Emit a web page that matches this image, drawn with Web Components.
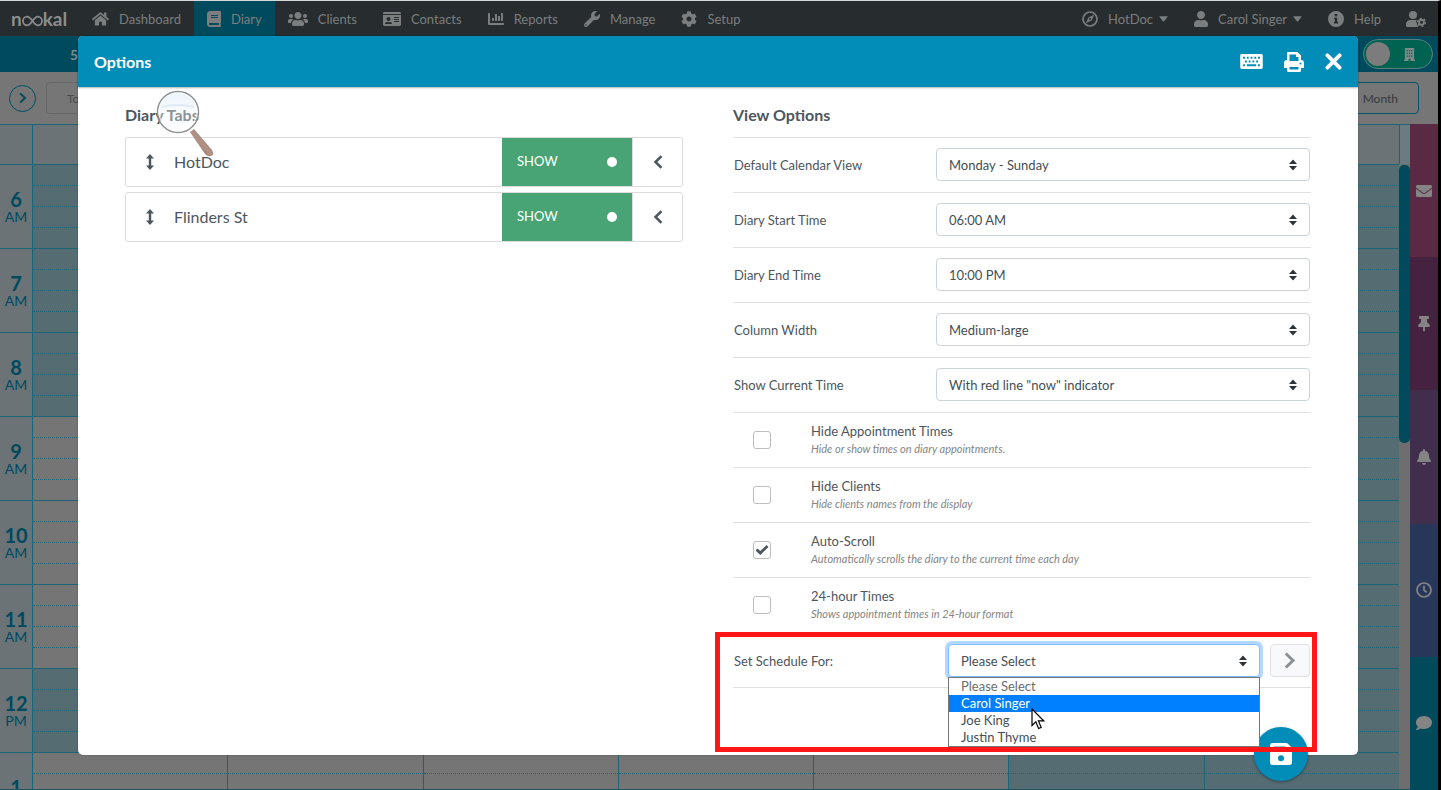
<!DOCTYPE html>
<html lang="en">
<head>
<meta charset="utf-8">
<meta name="viewport" content="width=device-width, initial-scale=1">
<title>Diary - Options</title>
<style>
    body{
        margin: 0;
        font-family: Lato, "Open Sans", sans-serif;
        font-size: 13px;
        color: #4d565c;
    }
</style>
</head>
<body>
<diary-app></diary-app>

<script>
//Icon shapes: [viewBox, markup]
const icons = {
    home: ['0 0 576 512', '<path d="M280.37 148.26L96 300.11V464a16 16 0 0 0 16 16l112.06-.29a16 16 0 0 0 15.92-16V368a16 16 0 0 1 16-16h64a16 16 0 0 1 16 16v95.64a16 16 0 0 0 16 16.05L464 480a16 16 0 0 0 16-16V300L295.67 148.26a12.19 12.19 0 0 0-15.3 0zM571.6 251.47L488 182.56V44.05a12 12 0 0 0-12-12h-56a12 12 0 0 0-12 12v72.61L318.47 43a48 48 0 0 0-61 0L4.34 251.47a12 12 0 0 0-1.6 16.9l25.5 31A12 12 0 0 0 45.15 301l235.22-193.74a12.19 12.19 0 0 1 15.3 0L530.9 301a12 12 0 0 0 16.9-1.6l25.5-31a12 12 0 0 0-1.7-16.93z"/>'],
    book: ['0 0 448 512', '<path d="M448 360V24c0-13.3-10.7-24-24-24H96C43 0 0 43 0 96v320c0 53 43 96 96 96h328c13.3 0 24-10.7 24-24v-16c0-7.5-3.5-14.3-8.9-18.7-4.2-15.4-4.2-59.3 0-74.7 5.4-4.3 8.9-11.1 8.9-18.6zM128 134c0-3.3 2.7-6 6-6h212c3.3 0 6 2.7 6 6v20c0 3.3-2.7 6-6 6H134c-3.3 0-6-2.7-6-6v-20zm0 64c0-3.3 2.7-6 6-6h212c3.3 0 6 2.7 6 6v20c0 3.3-2.7 6-6 6H134c-3.3 0-6-2.7-6-6v-20zm253.4 250H96c-17.7 0-32-14.3-32-32 0-17.6 14.4-32 32-32h285.4c-1.9 17.1-1.9 46.9 0 64z"/>'],
    users: ['0 0 640 512', '<path d="M96 224c35.3 0 64-28.7 64-64s-28.7-64-64-64-64 28.7-64 64 28.7 64 64 64zm448 0c35.3 0 64-28.7 64-64s-28.7-64-64-64-64 28.7-64 64 28.7 64 64 64zm32 32h-64c-17.6 0-33.5 7.1-45.1 18.6 40.3 22.1 68.9 62 75.1 109.4h66c17.7 0 32-14.3 32-32v-32c0-35.3-28.7-64-64-64zm-256 0c61.9 0 112-50.1 112-112S381.9 32 320 32 208 82.1 208 144s50.1 112 112 112zm76.8 32h-8.3c-20.8 10-43.9 16-68.5 16s-47.6-6-68.5-16h-8.3C179.6 288 128 339.6 128 403.2V432c0 26.5 21.5 48 48 48h288c26.5 0 48-21.5 48-48v-28.8c0-63.6-51.6-115.2-115.2-115.2zm-223.7-13.4C161.5 263.1 145.6 256 128 256H64c-35.3 0-64 28.7-64 64v32c0 17.7 14.3 32 32 32h65.9c6.3-47.4 34.9-87.3 75.2-109.4z"/>'],
    card: ['0 0 576 512', '<path d="M528 32H48C21.5 32 0 53.5 0 80v16h576V80c0-26.5-21.5-48-48-48zM0 432c0 26.5 21.5 48 48 48h480c26.5 0 48-21.5 48-48V128H0v304zm352-232c0-4.4 3.6-8 8-8h144c4.4 0 8 3.6 8 8v16c0 4.4-3.6 8-8 8H360c-4.4 0-8-3.6-8-8v-16zm0 64c0-4.4 3.6-8 8-8h144c4.4 0 8 3.6 8 8v16c0 4.4-3.6 8-8 8H360c-4.4 0-8-3.6-8-8v-16zm0 64c0-4.4 3.6-8 8-8h144c4.4 0 8 3.6 8 8v16c0 4.4-3.6 8-8 8H360c-4.4 0-8-3.6-8-8v-16zM176 192c35.3 0 64 28.7 64 64s-28.7 64-64 64-64-28.7-64-64 28.7-64 64-64zM67.1 396.2C75.5 370.5 99.6 352 128 352h8.2c12.3 5.1 25.7 8 39.8 8s27.6-2.9 39.8-8h8.2c28.4 0 52.5 18.5 60.9 44.2 3.2 9.9-5.2 19.8-15.6 19.8H82.7c-10.4 0-18.8-10-15.6-19.8z"/>'],
    chart: ['0 0 512 512', '<path d="M332.8 320h38.4c6.4 0 12.8-6.4 12.8-12.8V172.8c0-6.4-6.4-12.8-12.8-12.8h-38.4c-6.4 0-12.8 6.4-12.8 12.8v134.4c0 6.4 6.4 12.8 12.8 12.8zm96 0h38.4c6.4 0 12.8-6.4 12.8-12.8V76.8c0-6.4-6.4-12.8-12.8-12.8h-38.4c-6.4 0-12.8 6.4-12.8 12.8v230.4c0 6.4 6.4 12.8 12.8 12.8zm-288 0h38.4c6.4 0 12.8-6.4 12.8-12.8v-70.4c0-6.4-6.4-12.8-12.8-12.8h-38.4c-6.4 0-12.8 6.4-12.8 12.8v70.4c0 6.4 6.4 12.8 12.8 12.8zm96 0h38.4c6.4 0 12.8-6.4 12.8-12.8V108.8c0-6.4-6.4-12.8-12.8-12.8h-38.4c-6.4 0-12.8 6.4-12.8 12.8v198.4c0 6.4 6.4 12.8 12.8 12.8zM496 384H64V80c0-8.84-7.16-16-16-16H16C7.16 64 0 71.16 0 80v336c0 17.67 14.33 32 32 32h464c8.84 0 16-7.16 16-16v-32c0-8.84-7.16-16-16-16z"/>'],
    wrench: ['0 0 512 512', '<path d="M507.73 109.1c-2.24-9.03-13.54-12.09-20.12-5.51l-74.36 74.36-67.88-11.31-11.31-67.88 74.36-74.36c6.62-6.62 3.43-17.9-5.66-20.16-47.38-11.74-99.55.91-136.58 37.93-39.64 39.64-50.55 97.1-34.05 147.2L18.74 402.76c-24.99 24.99-24.99 65.51 0 90.5 24.99 24.99 65.51 24.99 90.5 0l213.21-213.21c50.12 16.71 107.47 5.68 147.37-34.22 37.07-37.07 49.7-89.32 37.91-136.73zM64 472c-13.25 0-24-10.75-24-24 0-13.26 10.75-24 24-24s24 10.74 24 24c0 13.25-10.75 24-24 24z"/>'],
    cog: ['0 0 512 512', '<path d="M487.4 315.7l-42.6-24.6c4.3-23.2 4.3-47 0-70.2l42.6-24.6c4.9-2.8 7.1-8.6 5.5-14-11.1-35.6-30-67.8-54.7-94.6-3.8-4.1-10-5.1-14.8-2.3L380.8 110c-17.9-15.4-38.5-27.3-60.8-35.1V25.8c0-5.6-3.9-10.5-9.4-11.7-36.7-8.2-74.3-7.8-109.2 0-5.5 1.2-9.4 6.1-9.4 11.7V75c-22.2 7.9-42.8 19.8-60.8 35.1L88.7 85.5c-4.9-2.8-11-1.9-14.8 2.3-24.7 26.7-43.6 58.9-54.7 94.6-1.7 5.4.6 11.2 5.5 14L67.3 221c-4.3 23.2-4.3 47 0 70.2l-42.6 24.6c-4.9 2.8-7.1 8.6-5.5 14 11.1 35.6 30 67.8 54.7 94.6 3.8 4.1 10 5.1 14.8 2.3l42.6-24.6c17.9 15.4 38.5 27.3 60.8 35.1v49.2c0 5.6 3.9 10.5 9.4 11.7 36.7 8.2 74.3 7.8 109.2 0 5.5-1.2 9.4-6.1 9.4-11.7v-49.2c22.2-7.9 42.8-19.8 60.8-35.1l42.6 24.6c4.9 2.8 11 1.9 14.8-2.3 24.7-26.7 43.6-58.9 54.7-94.6 1.5-5.5-.7-11.3-5.6-14.1zM256 336c-44.1 0-80-35.9-80-80s35.9-80 80-80 80 35.9 80 80-35.9 80-80 80z"/>'],
    compass: ['0 0 16 16', '<circle cx="8" cy="8" r="7" fill="none" stroke="currentColor" stroke-width="1.7"/><path fill-rule="evenodd" d="M12.2 3.8L9.6 9.6 3.8 12.2 6.4 6.4zM8 7a1 1 0 1 0 0 2 1 1 0 0 0 0-2z"/>'],
    user: ['0 0 448 512', '<path d="M224 256c70.7 0 128-57.3 128-128S294.7 0 224 0 96 57.3 96 128s57.3 128 128 128zm89.6 32h-16.7c-22.2 10.2-46.9 16-72.9 16s-50.6-5.8-72.9-16h-16.7C60.2 288 0 348.2 0 422.4V464c0 26.5 21.5 48 48 48h352c26.5 0 48-21.5 48-48v-41.6c0-74.2-60.2-134.4-134.4-134.4z"/>'],
    info: ['0 0 16 16', '<path fill-rule="evenodd" d="M8 0a8 8 0 1 0 0 16A8 8 0 0 0 8 0zM6.6 4.2a1.4 1.4 0 1 0 2.8 0 1.4 1.4 0 0 0-2.8 0zM6 6.7h3.2v4.1h.9v1.6H6v-1.6h.9V8.3H6z"/>'],
    usercog: ['0 0 20 16', '<circle cx="7" cy="4" r="4"/><path d="M4.2 9h5.6l1 .3-.9 1.8 1.3 1-.3 1.4 1.3 2.5H1.5A1.5 1.5 0 0 1 0 14.5v-1.3A4.2 4.2 0 0 1 4.2 9z"/><g fill="none" stroke="currentColor"><circle cx="15.5" cy="11.3" r="2.5" stroke-width="1.9"/><circle cx="15.5" cy="11.3" r="4" stroke-width="1.3" stroke-dasharray="2 2.18"/></g>'],
    building: ['0 0 12 14', '<path fill-rule="evenodd" d="M1 0h10v12.5h1V14H7v-2.500H5V14H0v-1.500h1zM2.800 2v1.400h1.400V2zM5.300 2v1.400h1.400V2zM7.800 2v1.400h1.400V2zM2.800 5v1.400h1.400V5zM5.300 5v1.400h1.400V5zM7.800 5v1.400h1.400V5zM2.800 8v1.400h1.400V8zM5.300 8v1.400h1.400V8zM7.800 8v1.400h1.400V8z"/>'],
    envelope: ['0 0 512 512', '<path d="M502.3 190.8c3.9-3.1 9.7-.2 9.7 4.7V400c0 26.5-21.5 48-48 48H48c-26.5 0-48-21.5-48-48V195.6c0-5 5.7-7.8 9.7-4.7 22.4 17.4 52.1 39.5 154.1 113.6 21.1 15.4 56.7 47.8 92.2 47.6 35.7.3 72-32.8 92.3-47.6 102-74.1 131.6-96.3 154-113.7zM256 320c23.2.4 56.6-29.2 73.4-41.4 132.7-96.3 142.8-104.7 173.4-128.7 5.8-4.5 9.2-11.5 9.2-18.9v-19c0-26.5-21.5-48-48-48H48c-26.5 0-48 21.5-48 48v19c0 7.4 3.4 14.3 9.2 18.9 30.6 23.9 40.7 32.4 173.4 128.7 16.8 12.2 50.2 41.8 73.4 41.4z"/>'],
    pin: ['0 0 384 512', '<path d="M298.028 214.267L285.793 96H328c13.255 0 24-10.745 24-24V24c0-13.255-10.745-24-24-24H56C42.745 0 32 10.745 32 24v48c0 13.255 10.745 24 24 24h42.207L85.972 214.267C37.465 236.82 0 277.261 0 328c0 13.255 10.745 24 24 24h136v104.007c0 1.242.289 2.467.845 3.578l24 48c2.941 5.882 11.364 5.893 14.311 0l24-48a8.008 8.008 0 0 0 .845-3.578V352h136c13.255 0 24-10.745 24-24-.001-51.183-37.983-91.42-85.973-113.733z"/>'],
    bell: ['0 0 448 512', '<path d="M224 512c35.32 0 63.97-28.65 63.97-64H160.03c0 35.35 28.65 64 63.97 64zm215.39-149.71c-19.32-20.76-55.47-51.99-55.47-154.29 0-77.7-54.48-139.9-127.94-155.16V32c0-17.67-14.32-32-31.98-32s-31.98 14.33-31.98 32v20.84C118.56 68.1 64.08 130.3 64.08 208c0 102.3-36.15 133.53-55.47 154.29-6 6.45-8.66 14.16-8.61 21.71.11 16.4 12.98 32 32.1 32h383.8c19.12 0 32-15.6 32.1-32 .05-7.55-2.61-15.27-8.61-21.71z"/>'],
    clock: ['0 0 16 16', '<g fill="none" stroke="currentColor" stroke-width="1.7"><circle cx="8" cy="8" r="7"/><path d="M8 3.5v4.7l2.7 2.2"/></g>'],
    comment: ['0 0 512 512', '<path d="M256 32C114.6 32 0 125.1 0 240c0 49.6 21.4 95 57 130.7C44.5 421.1 2.7 466 2.2 466.5c-2.2 2.3-2.8 5.7-1.5 8.7S4.8 480 8 480c66.3 0 116-31.8 140.6-51.4 32.7 12.3 69 19.4 107.4 19.4 141.4 0 256-93.1 256-208S397.4 32 256 32z"/>'],
    caret: ['0 0 10 6', '<path d="M1 0h8q1 0 .4.9L5.6 5.5q-.6.6-1.2 0L.6.9Q0 0 1 0z"/>'],
    sort: ['0 0 8 12', '<path d="M4 .5l4 4.4H0zM4 11.500L0 7.100h8z"/>'],
    left: ['0 0 10 14', '<path d="M8.5 1.2L2.5 7l6 5.8" fill="none" stroke="currentColor" stroke-width="2.5"/>'],
    right: ['0 0 10 14', '<path d="M1.5 1.2l6 5.8-6 5.8" fill="none" stroke="currentColor" stroke-width="2.5"/>'],
    updown: ['0 0 8 16', '<path d="M4 0l4 4.5H5.2v7H8L4 16 0 11.5h2.8v-7H0z"/>'],
    close: ['0 0 14 14', '<path d="M2 2l10 10M12 2L2 12" fill="none" stroke="currentColor" stroke-width="3.2" stroke-linecap="round"/>'],
    keyboard: ['0 0 24 16', '<path fill-rule="evenodd" d="M1.5 0h21Q24 0 24 1.5v13q0 1.5-1.5 1.5h-21Q0 16 0 14.5v-13Q0 0 1.5 0zM3 3v2h2V3zm4 0v2h2V3zm4 0v2h2V3zm4 0v2h2V3zm4 0v2h2V3zM5 7v2h2V7zm4 0v2h2V7zm4 0v2h2V7zm4 0v2h2V7zM3 11v2h2v-2zm4 0v2h10v-2zm12 0v2h2v-2z"/>'],
    print: ['0 0 20 20', '<path fill-rule="evenodd" d="M4 0h9.5L17 3.5V8q3 0 3 3v5h-3v2.5Q17 20 15.5 20h-11Q3 20 3 18.500V16H0v-5q0-3 3-3V1q0-1 1-1zm1.500 2.500V9h9V5H12V2.500zm0 12.500v2.500h9V15zM16.500 10.500a1 1 0 1 0 0 2 1 1 0 0 0 0-2z"/>'],
    save: ['0 0 22 22', '<path fill-rule="evenodd" d="M2.5 0h13.6q1 0 1.8.8l3.3 3.3q.8.8.8 1.8v13.6q0 2.5-2.5 2.5h-17Q0 22 0 19.500v-17Q0 0 2.500 0zM3.500 3.500v5h12v-5zM11 12.200a3 3 0 1 0 0 6 3 3 0 0 0 0-6z"/>'],
    infinity: ['0 0 22 12', '<path d="M11 6C9 3.3 7.6 1.5 5.5 1.5a4.5 4.5 0 0 0 0 9C7.6 10.5 9 8.7 11 6s3.4-4.5 5.5-4.5a4.5 4.5 0 0 1 0 9C14.4 10.5 13 8.7 11 6z" fill="none" stroke="currentColor" stroke-width="1.8"/>']
};

const hours = [['6', 'AM', 1], ['7', 'AM', 1], ['8', 'AM', 1], ['9', 'AM', 0], ['10', 'AM', 0], ['11', 'AM', 0], ['12', 'PM', 1], ['1', 'PM', 0]];

//Base class, every element only gives its template
class baseElement extends HTMLElement{
    constructor(){
        super();
        this.attachShadow({mode: "open"});
    }

    render(){
        const template = document.createElement('template');
        template.innerHTML = this.getTemplate();
        this.shadowRoot.replaceChildren(template.content.cloneNode(true));
    }

    connectedCallback(){
        this.render();
    }
}

class uiIcon extends baseElement{
    getTemplate(){
        const [box, shape] = icons[this.getAttribute('name')];
        const w = this.getAttribute('w');
        const h = this.getAttribute('h') || w;
        return `
            <style>
                :host{ display: inline-flex; flex: none; }
                svg{ display: block; fill: currentColor; }
            </style>
            <svg width="${w}" height="${h}" viewBox="${box}" aria-hidden="true">${shape}</svg>
        `;
    }
}

class navItem extends baseElement{
    getTemplate(){
        const caret = this.hasAttribute('menu') ? '<ui-icon name="caret" w="9" h="6"></ui-icon>' : '';
        return `
            <style>
                :host{ display: block; }
                a{
                    display: flex;
                    align-items: center;
                    height: 100%;
                    padding: 0 13px;
                    gap: 10px;
                    box-sizing: border-box;
                    color: inherit;
                    text-decoration: none;
                }
                .label{ display: flex; align-items: center; gap: 6px; white-space: nowrap; }
                :host([active]) a{ background: #004a5e; }
            </style>
            <a href="#">
                <ui-icon name="${this.getAttribute('icon')}" w="${this.getAttribute('w')}" h="16"></ui-icon>
                <span class="label"><slot></slot>${caret}</span>
            </a>
        `;
    }
}

class navBar extends baseElement{
    getTemplate(){
        return `
            <style>
                :host{ display: block; background: #272c2e; color: #7b7e7f; }
                nav{ display: flex; height: 35px; }
                .logo{
                    display: flex;
                    align-items: center;
                    width: 68px;
                    padding-left: 11px;
                    font-size: 19px;
                    font-weight: 700;
                    color: #8b8e8f;
                    text-decoration: none;
                }
                .logo ui-icon{ padding-top: 4px; }
                .space{ flex: 1; }
                .last{ display: flex; align-items: center; padding: 0 12px; color: inherit; }
            </style>
            <nav>
                <a class="logo" href="#" aria-label="nookal">n<ui-icon name="infinity" w="21" h="12"></ui-icon>kal</a>
                <nav-item icon="home" w="17">Dashboard</nav-item>
                <nav-item icon="book" w="14" active>Diary</nav-item>
                <nav-item icon="users" w="20">Clients</nav-item>
                <nav-item icon="card" w="18">Contacts</nav-item>
                <nav-item icon="chart" w="16">Reports</nav-item>
                <nav-item icon="wrench" w="16">Manage</nav-item>
                <nav-item icon="cog" w="16">Setup</nav-item>
                <div class="space"></div>
                <nav-item icon="compass" w="16" menu>HotDoc</nav-item>
                <nav-item icon="user" w="14" menu>Carol Singer</nav-item>
                <nav-item icon="info" w="16">Help</nav-item>
                <a class="last" href="#" aria-label="Account"><ui-icon name="usercog" w="20" h="16"></ui-icon></a>
            </nav>
        `;
    }
}

class diaryToolbar extends baseElement{
    getTemplate(){
        return `
            <style>
                :host{ display: block; }
                button{ font: inherit; cursor: pointer; }
                .date{
                    display: flex;
                    align-items: center;
                    justify-content: space-between;
                    height: 36px;
                    padding: 0 5px 0 70px;
                    background: #004a5e;
                    color: #7b8b90;
                    font-size: 14px;
                    font-weight: 700;
                }
                .switch{
                    display: flex;
                    align-items: center;
                    gap: 14px;
                    width: 70px;
                    height: 30px;
                    padding: 0 2px;
                    border: 1px solid #57807f;
                    border-radius: 15px;
                    background: #006351;
                    color: #7d8b88;
                }
                .knob{ width: 24px; height: 24px; border-radius: 50%; background: #7c7c7c; }
                .tools{
                    display: flex;
                    align-items: center;
                    height: 52px;
                    padding: 0 19px 0 9px;
                    gap: 10px;
                    background: #767676;
                }
                .next{
                    display: flex;
                    align-items: center;
                    justify-content: center;
                    width: 27px;
                    height: 27px;
                    padding: 0;
                    border: 1px solid #004f63;
                    border-radius: 50%;
                    background: none;
                    color: #004a5e;
                }
                .box{
                    height: 32px;
                    padding: 0 20px;
                    border: 1px solid #666;
                    border-radius: 4px;
                    background: none;
                    color: #4b4b4b;
                    font-size: 12px;
                }
                .month{ margin-left: auto; border-color: #00566b; color: #34393b; }
            </style>
            <div class="date">
                <span>5</span>
                <button class="switch" role="switch" aria-checked="false" aria-label="Location view">
                    <span class="knob"></span>
                    <ui-icon name="building" w="11" h="13"></ui-icon>
                </button>
            </div>
            <div class="tools">
                <button class="next" aria-label="Next"><ui-icon name="right" w="8" h="12"></ui-icon></button>
                <button class="box">Today</button>
                <button class="box month">Month</button>
            </div>
        `;
    }
}

class diaryGrid extends baseElement{
    getCells(open){
        //Saturday and Sunday are always closed
        return Array.from({length: 7}, (_, i) => `
            <div class="day ${open && i < 5 ? '' : 'closed'}"><i></i><i></i><i></i><i></i></div>
        `).join('');
    }

    getTemplate(){
        const rows = hours.map(([n, m, closed]) => `
            <div class="hour">
                <div class="time"><b>${n}</b><span>${m}</span></div>
                ${this.getCells(!closed)}
            </div>
        `).join('');
        return `
            <style>
                :host{ display: flex; flex-direction: column; min-height: 0; overflow: hidden; background: #6b7377; --line: #1a6678; }
                .head, .hour{ display: flex; flex: none; border-top: 1px solid var(--line); box-sizing: border-box; }
                .head{ height: 40px; }
                .head div, .day{ flex: 1; border-left: 1px solid var(--line); }
                .head .corner{ flex: 0 0 32px; border: 0; }
                .head .end{ flex: 0 0 10px; background: #6b7b81; }
                .body{ display: flex; flex: 1; min-height: 0; overflow: hidden; border-bottom: 1px solid #1d5563; }
                .rows{ flex: 1; }
                .hour{ height: 84px; }
                .time{
                    display: flex;
                    flex-direction: column;
                    align-items: center;
                    justify-content: center;
                    flex: 0 0 32px;
                    padding-top: 2px;
                    box-sizing: border-box;
                    font-size: 14px;
                    line-height: 17px;
                    color: #004a5e;
                }
                .time b{ font-size: 20px; }
                .day{ display: flex; flex-direction: column; background: #757575; }
                .closed{ background: #566c73; }
                .day i{ height: 20px; border-top: 1px dotted var(--line); }
                .day i:first-child{ border-color: transparent; height: 19px; }
                .track{ width: 11px; background: #6e6e6e; }
                .thumb{ height: 278px; border-radius: 5px; background: #004a5c; margin-top: 1px; }
            </style>
            <div class="head">
                <div class="corner"></div>
                <div></div><div></div><div></div><div></div><div></div><div></div><div></div>
                <div class="end"></div>
            </div>
            <div class="body">
                <div class="rows">${rows}</div>
                <div class="track"><div class="thumb"></div></div>
            </div>
        `;
    }
}

class sideRail extends baseElement{
    getTemplate(){
        return `
            <style>
                :host{ display: flex; flex-direction: column; width: 28px; flex: none; }
                button{
                    display: flex;
                    align-items: center;
                    justify-content: center;
                    flex: 1;
                    padding: 0;
                    border: 0;
                    color: #848484;
                }
                .mail{ background: #5a2943; }
                .pin{ background: #45223f; }
                .bell{ background: #402e4c; }
                .clock{ background: #27375a; }
                .chat{ background: #004a5c; }
            </style>
            <button class="mail" aria-label="Messages"><ui-icon name="envelope" w="16"></ui-icon></button>
            <button class="pin" aria-label="Notes"><ui-icon name="pin" w="12" h="16"></ui-icon></button>
            <button class="bell" aria-label="Alerts"><ui-icon name="bell" w="14" h="16"></ui-icon></button>
            <button class="clock" aria-label="Wait list"><ui-icon name="clock" w="16"></ui-icon></button>
            <button class="chat" aria-label="Chat"><ui-icon name="comment" w="16"></ui-icon></button>
        `;
    }
}

class tabRow extends baseElement{
    getTemplate(){
        return `
            <style>
                :host{
                    display: flex;
                    height: 50px;
                    box-sizing: border-box;
                    border: 1px solid #dcdcdc;
                    border-radius: 3px;
                }
                button{ font: inherit; border: 0; padding: 0; background: none; color: inherit; cursor: pointer; }
                .drag{ width: 48px; display: flex; align-items: center; justify-content: center; }
                .name{ flex: 1; align-self: center; padding-bottom: 2px; font-size: 16px; }
                .show{
                    display: flex;
                    align-items: center;
                    justify-content: space-between;
                    width: 130px;
                    padding: 0 15px;
                    background: #48a474;
                    color: #fff;
                }
                .text{ padding-bottom: 2px; }
                .dot{ width: 10px; height: 10px; border-radius: 50%; background: #fff; }
                .open{ width: 50px; display: flex; align-items: center; justify-content: center; border-left: 1px solid #dcdcdc; }
            </style>
            <button class="drag" aria-label="Move"><ui-icon name="updown" w="8" h="16"></ui-icon></button>
            <span class="name"><slot></slot></span>
            <button class="show"><span class="text">SHOW</span><span class="dot"></span></button>
            <button class="open" aria-label="Open"><ui-icon name="left" w="10" h="14"></ui-icon></button>
        `;
    }
}

class optionSelect extends baseElement{
    getTemplate(){
        return `
            <style>
                :host{
                    display: flex;
                    align-items: center;
                    height: 55px;
                    padding-bottom: 1px;
                    box-sizing: border-box;
                    border-top: 1px solid #e0e0e0;
                }
                label{ flex: 0 0 203px; padding-left: 1px; box-sizing: border-box; }
                .field{ display: grid; flex: 1; align-items: center; margin-right: 1px; }
                .field > *{ grid-area: 1 / 1; }
                select{
                    appearance: none;
                    width: 100%;
                    height: 33px;
                    padding: 0 12px;
                    border: 1px solid #ccd3da;
                    border-radius: 4px;
                    background: #fff;
                    color: #454e54;
                    font: inherit;
                }
                ui-icon{ justify-self: end; margin-right: 13px; color: #2d353a; pointer-events: none; }
            </style>
            <label for="field">${this.getAttribute('label')}</label>
            <div class="field">
                <select id="field"><option>${this.getAttribute('value')}</option></select>
                <ui-icon name="sort" w="8" h="12"></ui-icon>
            </div>
        `;
    }
}

class optionCheck extends baseElement{
    getTemplate(){
        return `
            <style>
                :host{ display: flex; align-items: center; height: 55px; box-sizing: border-box; border-top: 1px solid #e0e0e0; }
                input{
                    appearance: none;
                    display: grid;
                    place-items: center;
                    flex: none;
                    width: 18px;
                    height: 18px;
                    margin: 0 40px 0 20px;
                    border: 1px solid #bdbdbd;
                    border-radius: 3px;
                    background: #fff;
                }
                input:checked::before{
                    content: "";
                    width: 13px;
                    height: 12px;
                    background: #4d565c;
                    clip-path: polygon(0 54%, 15% 38%, 37% 59%, 85% 8%, 100% 24%, 37% 92%);
                }
                label{ display: block; line-height: 18px; }
                small{ display: block; font-size: 11px; font-style: italic; color: #858585; }
            </style>
            <input type="checkbox" id="box" ${this.hasAttribute('checked') ? 'checked' : ''}>
            <label for="box"><slot></slot><small>${this.getAttribute('hint')}</small></label>
        `;
    }
}

class scheduleRow extends baseElement{
    getTemplate(){
        return `
            <style>
                :host{
                    display: flex;
                    align-items: center;
                    position: relative;
                    height: 56px;
                    padding-top: 1px;
                    box-sizing: border-box;
                    border-top: 1px solid #e0e0e0;
                    border-bottom: 1px solid #e0e0e0;
                }
                label{ flex: 0 0 215px; padding-left: 1px; box-sizing: border-box; }
                .field{ display: grid; flex: 1; align-items: center; position: relative; }
                .field > *{ grid-area: 1 / 1; }
                select{
                    appearance: none;
                    width: 100%;
                    height: 33px;
                    padding: 0 12px;
                    border: 1px solid #80bdff;
                    border-radius: 4px;
                    box-shadow: 0 0 0 3px #b3d8ff;
                    background: #fff;
                    color: #454e54;
                    font: inherit;
                }
                ui-icon.sort{ justify-self: end; margin-right: 13px; color: #2d353a; pointer-events: none; }
                .list{
                    position: absolute;
                    top: 33px;
                    left: 0;
                    right: 0;
                    z-index: 3;
                    margin: 0;
                    padding: 0;
                    border: 1px solid #767676;
                    background: #fff;
                    list-style: none;
                    line-height: 17px;
                }
                .list li{ padding: 0 12px; color: #454e54; }
                .list .first{ color: #6d6d6d; }
                .list .over{ background: #0080ff; color: #fff; }
                .go{
                    display: flex;
                    align-items: center;
                    justify-content: center;
                    width: 40px;
                    height: 33px;
                    margin: 0 1px 0 10px;
                    border: 1px solid #dfe1e3;
                    border-radius: 4px;
                    background: #f8f9fa;
                    color: #8a9095;
                }
                /* highlight frame and pointer lie over the row and the open list */
                .frame{
                    position: absolute;
                    top: -1px;
                    left: -18px;
                    right: -6px;
                    height: 120px;
                    z-index: 4;
                    box-sizing: border-box;
                    border: 5px solid #ff1616;
                    pointer-events: none;
                }
                .pointer{ position: absolute; top: 64px; left: 83px; z-index: 5; }
            </style>
            <label for="who">Set Schedule For:</label>
            <div class="field">
                <select id="who"><option>Please Select</option></select>
                <ui-icon class="sort" name="sort" w="8" h="12"></ui-icon>
                <ul class="list" role="listbox" aria-label="Set Schedule For">
                    <li class="first" role="option">Please Select</li>
                    <li class="over" role="option" aria-selected="true">Carol Singer</li>
                    <li role="option">Joe King</li>
                    <li role="option">Justin Thyme</li>
                </ul>
                <svg class="pointer" width="14" height="22" viewBox="0 0 14 22" aria-hidden="true">
                    <path d="M1 1v16.5l3.8-3.7 2.8 6.7 2.6-1.1-2.8-6.5h5.3z" fill="#fff" stroke="#000" stroke-width="1.2"/>
                </svg>
            </div>
            <button class="go" aria-label="Set schedule"><ui-icon name="right" w="12" h="17"></ui-icon></button>
            <div class="frame"></div>
        `;
    }
}

class optionsModal extends baseElement{
    getTemplate(){
        return `
            <style>
                :host{
                    display: block;
                    position: relative;
                    border-radius: 5px;
                    background: #fff;
                    box-shadow: 0 0 2px rgba(0,0,0,.3);
                }
                header{
                    display: flex;
                    align-items: center;
                    height: 51px;
                    padding: 0 16px;
                    box-sizing: border-box;
                    border-radius: 5px 5px 0 0;
                    background: #028cb8;
                    box-shadow: 0 1px 2px rgba(0,0,0,.3);
                    color: #fff;
                }
                h1{ flex: 1; margin: 0; font-size: 16px; line-height: 20px; }
                .actions{ display: flex; align-items: center; gap: 21px; }
                .actions button{ display: flex; padding: 0; border: 0; background: none; color: inherit; cursor: pointer; }
                .content{
                    display: grid;
                    grid-template-columns: 558fr 578fr;
                    gap: 50px;
                    padding: 0 47px 67px;
                }
                h2{ margin: 0; padding: 18px 0 12px; font-size: 16px; line-height: 20px; }
                .tabs{ position: relative; }
                .tabs tab-row + tab-row{ margin-top: 5px; }
                .glass{ position: absolute; top: 3px; left: 31px; pointer-events: none; }
                .save{
                    display: flex;
                    align-items: center;
                    justify-content: center;
                    position: absolute;
                    right: 50px;
                    bottom: -26px;
                    z-index: 2;
                    width: 54px;
                    height: 54px;
                    padding: 0;
                    border: 0;
                    border-radius: 50%;
                    background: #028cb8;
                    box-shadow: 0 1px 3px rgba(0,0,0,.4);
                    color: #fff;
                }
            </style>
            <header>
                <h1>Options</h1>
                <div class="actions">
                    <button aria-label="Keyboard shortcuts"><ui-icon name="keyboard" w="23" h="15"></ui-icon></button>
                    <button aria-label="Print"><ui-icon name="print" w="20" h="20"></ui-icon></button>
                    <button aria-label="Close"><ui-icon name="close" w="17"></ui-icon></button>
                </div>
            </header>
            <div class="content">
                <section class="tabs">
                    <h2>Diary Tabs</h2>
                    <tab-row>HotDoc</tab-row>
                    <tab-row>Flinders St</tab-row>
                    <svg class="glass" width="60" height="70" viewBox="0 0 60 70" aria-hidden="true">
                        <defs>
                            <linearGradient id="lens" x1="0" y1="0" x2="0" y2="1">
                                <stop offset="0" stop-color="#dcebf8" stop-opacity=".6"/>
                                <stop offset=".45" stop-color="#edf4fb" stop-opacity=".4"/>
                                <stop offset="1" stop-color="#fff" stop-opacity=".3"/>
                            </linearGradient>
                            <linearGradient id="wood" x1="0" y1="1" x2="1" y2="0">
                                <stop offset="0" stop-color="#8d6a5c"/>
                                <stop offset=".5" stop-color="#b29386"/>
                                <stop offset="1" stop-color="#7d655c"/>
                            </linearGradient>
                        </defs>
                        <path d="M34 42l4-3 18 21q3 5-1 6-3 1-6-2z" fill="url(#wood)"/>
                        <circle cx="22" cy="22" r="20.5" fill="url(#lens)" stroke="#8e9091" stroke-width="1.4"/>
                        <circle cx="22" cy="22" r="19" fill="none" stroke="#fff" stroke-opacity=".8"/>
                        <path d="M6 17q16-4 32 0" fill="none" stroke="#cfe2f4" stroke-opacity=".6" stroke-width="2"/>
                    </svg>
                </section>
                <section>
                    <h2>View Options</h2>
                    <option-select label="Default Calendar View" value="Monday - Sunday"></option-select>
                    <option-select label="Diary Start Time" value="06:00 AM"></option-select>
                    <option-select label="Diary End Time" value="10:00 PM"></option-select>
                    <option-select label="Column Width" value="Medium-large"></option-select>
                    <option-select label="Show Current Time" value='With red line &quot;now&quot; indicator'></option-select>
                    <option-check hint="Hide or show times on diary appointments.">Hide Appointment Times</option-check>
                    <option-check hint="Hide clients names from the display">Hide Clients</option-check>
                    <option-check hint="Automatically scrolls the diary to the current time each day" checked>Auto-Scroll</option-check>
                    <option-check hint="Shows appointment times in 24-hour format">24-hour Times</option-check>
                    <schedule-row></schedule-row>
                </section>
            </div>
            <button class="save" aria-label="Save"><ui-icon name="save" w="22"></ui-icon></button>
        `;
    }
}

class diaryApp extends baseElement{
    getTemplate(){
        return `
            <style>
                :host{
                    display: flex;
                    flex-direction: column;
                    position: relative;
                    height: 100vh;
                    box-sizing: border-box;
                    border-top: 1px solid #d5d8d9;
                    border-right: 3px solid #000;
                    overflow: hidden;
                }
                main{ display: flex; flex: 1; min-height: 0; }
                diary-grid{ flex: 1; }
                .layer{ position: absolute; inset: 0; padding: 35px 80px 0 78px; }
            </style>
            <nav-bar></nav-bar>
            <diary-toolbar></diary-toolbar>
            <main>
                <diary-grid></diary-grid>
                <side-rail></side-rail>
            </main>
            <div class="layer"><options-modal></options-modal></div>
        `;
    }
}

customElements.define("ui-icon", uiIcon);
customElements.define("nav-item", navItem);
customElements.define("nav-bar", navBar);
customElements.define("diary-toolbar", diaryToolbar);
customElements.define("diary-grid", diaryGrid);
customElements.define("side-rail", sideRail);
customElements.define("tab-row", tabRow);
customElements.define("option-select", optionSelect);
customElements.define("option-check", optionCheck);
customElements.define("schedule-row", scheduleRow);
customElements.define("options-modal", optionsModal);
customElements.define("diary-app", diaryApp);
</script>
</body>
</html>
